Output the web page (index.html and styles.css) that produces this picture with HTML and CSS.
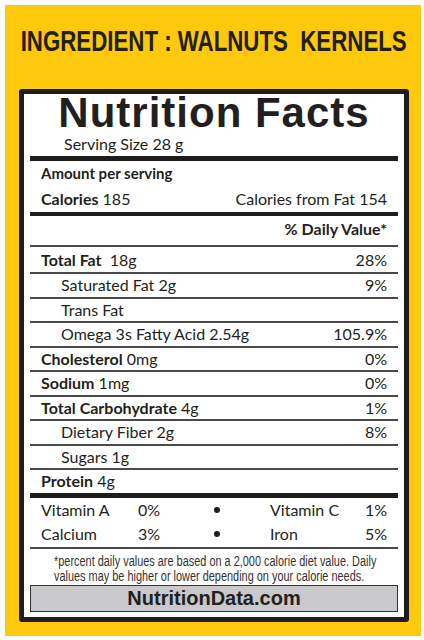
FILE: index.html
```html
<!DOCTYPE html>
<html lang="en">
    <head>
        <meta charset="UTF-8">
        <meta name="viewport" content="width=device-width, initial-scale=1.0">
        <title>Walnuts Kernels - Nutrition Facts</title>
        <link rel="stylesheet" href="styles.css">
    </head>
    <body>
        <div class="label">
            <h2 class="ingredient"><span>INGREDIENT : WALNUTS&nbsp; KERNELS</span></h2>

            <div class="facts">
                <h1 class="facts-title">Nutrition Facts</h1>
                <div class="serving">Serving Size 28 g</div>

                <div class="section thick">
                    <div class="row amount">Amount per serving</div>
                    <div class="row calories">
                        <span><b>Calories</b> 185</span>
                        <span>Calories from Fat 154</span>
                    </div>
                </div>

                <div class="section medium">
                    <div class="row daily"><b>% Daily Value*</b></div>
                    <div class="row line big"><span><b>Total Fat</b>&nbsp; 18g</span><span>28%</span></div>
                    <div class="row line sub"><span>Saturated Fat 2g</span><span>9%</span></div>
                    <div class="row line sub"><span>Trans Fat</span></div>
                    <div class="row line sub"><span>Omega 3s Fatty Acid 2.54g</span><span>105.9%</span></div>
                    <div class="row line"><span><b>Cholesterol</b> 0mg</span><span>0%</span></div>
                    <div class="row line"><span><b>Sodium</b> 1mg</span><span>0%</span></div>
                    <div class="row line"><span><b>Total Carbohydrate</b> 4g</span><span>1%</span></div>
                    <div class="row line sub"><span>Dietary Fiber 2g</span><span>8%</span></div>
                    <div class="row line sub"><span>Sugars 1g</span></div>
                    <div class="row line"><span><b>Protein</b> 4g</span></div>
                </div>

                <div class="section thick vitamins">
                    <div class="vit-row">
                        <span>Vitamin A</span><span>0%</span><span class="dot"></span>
                        <span class="vit-name">Vitamin C</span><span>1%</span>
                    </div>
                    <div class="vit-row">
                        <span>Calcium</span><span>3%</span><span class="dot"></span>
                        <span class="vit-name">Iron</span><span>5%</span>
                    </div>
                </div>

                <p class="footnote"><span>*percent daily values are based on a 2,000 calorie diet value. Daily<br>values may be higher or lower depending on your calorie needs.</span></p>

                <div class="source">NutritionData.com</div>
            </div>
        </div>
    </body>
</html>
```

FILE: styles.css
```css
body { margin: 0; background: #fff; color: #231f20; font-family: Lato, "Open Sans", sans-serif; }
h1, h2, p { margin: 0; }

.label { width: 416px; height: 631px; margin: 5px; box-sizing: border-box; padding: 21px 12px 14px 14px; background: #fec80c; }
/* no condensed face installed, so squeeze the bold sans horizontally */
.ingredient { display: flex; justify-content: center; height: 30px; margin-bottom: 33px; font-family: "Liberation Sans", Arial, sans-serif; font-size: 29.5px; line-height: 30px; font-weight: bold; white-space: nowrap; }
.ingredient span { display: block; transform: scaleX(0.755); }

.facts { height: 533px; box-sizing: border-box; padding: 0 6px 3px 6px; background: #fff; border: 5px solid #1e1c1d; border-radius: 3px; }
.facts-title { height: 38px; font-family: "Liberation Sans", Arial, sans-serif; font-size: 42px; line-height: 38px; font-weight: bold; letter-spacing: 1px; text-align: center; }
.serving { height: 24px; padding-left: 34px; font-size: 16px; line-height: 24px; }

.section.thick { border-top: 5px solid #1e1c1d; }
.section.medium { border-top: 4px solid #1e1c1d; }

.row { display: flex; justify-content: space-between; padding: 0 11px; font-size: 16px; line-height: 22.5px; white-space: nowrap; }
.row b { font-weight: bold; }
.row.amount { font-size: 15px; font-weight: bold; line-height: 24px; }
.row.calories { line-height: 27px; }
.row.daily { justify-content: flex-end; line-height: 26px; padding-bottom: 3px; }
.row.line { border-top: 2px solid #4a4a4a; }
.row.big { line-height: 25px; }
.row.sub { padding-left: 31px; }

.vitamins { padding: 0 11px; }
.vit-row { display: grid; grid-template-columns: 97px 69px 20px 1fr auto; align-items: center; font-size: 16px; line-height: 24.5px; }
.vit-row .dot { justify-self: center; width: 6px; height: 6px; border-radius: 50%; background: #1e1c1d; }
.vit-row .vit-name { padding-left: 43px; }

.footnote { height: 38px; box-sizing: border-box; padding: 5px 0 0 24px; border-top: 2px solid #4a4a4a; font-family: "Liberation Sans", Arial, sans-serif; font-size: 14px; line-height: 15px; color: #333; white-space: nowrap; }
.footnote span { display: block; transform: scaleX(0.78); transform-origin: left center; }

.source { height: 27px; box-sizing: border-box; border: 1px solid #333; background: #c9c9cb; font-family: "Liberation Sans", Arial, sans-serif; font-size: 20px; font-weight: bold; line-height: 25px; text-align: center; }
```
